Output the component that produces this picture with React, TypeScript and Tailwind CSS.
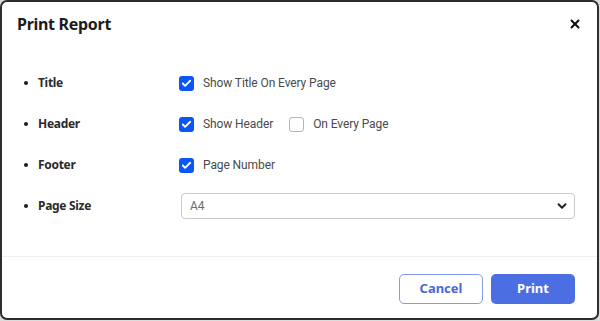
import { Check, ChevronDown, X } from "lucide-react";

type Row = { label: string; content: React.ReactNode };

function Box({ checked }: { checked: boolean }) {
  return checked ? (
    <span className="w-[15px] h-[15px] rounded-[3px] bg-[#0b57f5] flex items-center justify-center">
      <Check className="w-[11px] h-[11px] text-white" strokeWidth={4} />
    </span>
  ) : (
    <span className="w-[15px] h-[15px] rounded-[3px] border border-[#b5b5b5] bg-white" />
  );
}

function Option({ checked, text }: { checked: boolean; text: string }) {
  return (
    <label className="flex items-center gap-[9px] text-[12px] tracking-[-0.1px] text-[#4a4a4a] font-['Roboto',sans-serif]">
      <Box checked={checked} />
      {text}
    </label>
  );
}

export default function App() {
  const rows: Row[] = [
    { label: "Title", content: <Option checked text="Show Title On Every Page" /> },
    {
      label: "Header",
      content: (
        <div className="flex items-center gap-[16px]">
          <Option checked text="Show Header" />
          <Option checked={false} text="On Every Page" />
        </div>
      ),
    },
    { label: "Footer", content: <Option checked text="Page Number" /> },
    {
      label: "Page Size",
      content: (
        <div className="ml-[2px] w-[394px] h-[26px] border border-[#c9c9c9] rounded-[4px] flex items-center justify-between pl-[8px] pr-[4px] text-[12px] text-[#6b6b6b] font-['Roboto',sans-serif]">
          A4
          <ChevronDown className="w-[14px] h-[14px] mr-[1px] text-[#222]" strokeWidth={3.4} />
        </div>
      ),
    },
  ];

  return (
    <div className="w-[600px] h-[321px] bg-[#dcdcdc] font-['Noto_Sans',sans-serif]">
      <div className="w-[599px] h-[320px] bg-white border-2 border-[#2e2e2e] rounded-[7px] flex flex-col">
        <div className="flex items-center justify-between pl-[15px] pr-[15px] pt-[5px] h-[38px]">
          <h1 className="text-[16px] tracking-[-0.3px] font-bold text-[#1c1c1c]">Print Report</h1>
          <X className="w-[14px] h-[14px] text-[#111]" strokeWidth={3.5} />
        </div>

        <div className="flex flex-col gap-[17px] pt-[31px] pl-[22px]">
          {rows.map((row) => (
            <div key={row.label} className="flex items-center h-[24px]">
              <div className="w-[155px] flex items-center gap-[10px]">
                <span className="w-[4px] h-[4px] rounded-full bg-[#1c1c1c]" />
                <span className="text-[12px] tracking-[-0.3px] font-bold text-[#2a2a2a]">{row.label}</span>
              </div>
              {row.content}
            </div>
          ))}
        </div>

        <div className="mt-auto border-t border-[#f0f0f0] h-[62px] flex items-center justify-end gap-[8px] pr-[22px] pt-[3px]">
          <button className="w-[84px] h-[30px] rounded-[5px] border border-[#7f9cf2] text-[#4a67d6] text-[13px] font-bold">
            Cancel
          </button>
          <button className="w-[84px] h-[30px] rounded-[5px] bg-[#4b6fe3] text-white text-[13px] font-bold">
            Print
          </button>
        </div>
      </div>
    </div>
  );
}
